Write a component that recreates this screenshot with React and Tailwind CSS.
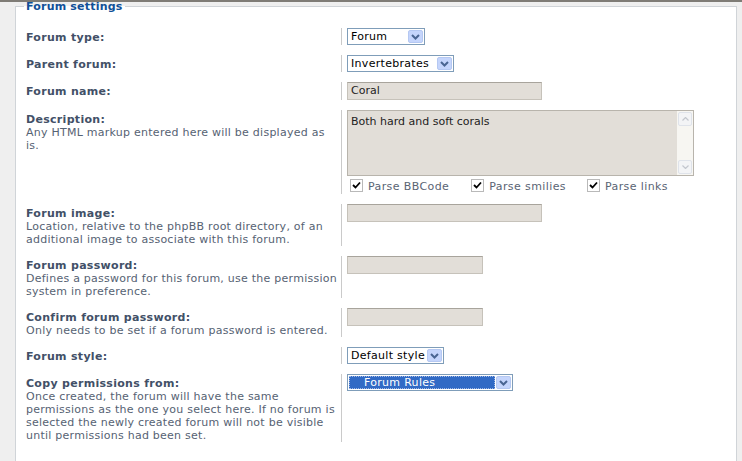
import React from 'react';

const font = { fontFamily: '"DejaVu Sans", Verdana, sans-serif' };

function Arrow() {
    return (
        <span className="mr-[1px] flex h-[13px] w-[15px] items-center justify-center rounded-[2px] border border-[#b5c8f2] bg-[#c5d5fc]">
            <svg width="9" height="6" viewBox="0 0 9 6">
                <path d="M1 1 L4.5 4.5 L8 1" fill="none" stroke="#4a6592" strokeWidth="2" />
            </svg>
        </span>
    );
}

function Select({ width, children, selected }) {
    return (
        <div className={`flex h-[17px] items-center border border-[#7f9db9] bg-white ${width}`}>
            {selected ? (
                <span className="mx-[1px] flex h-[13px] flex-1 items-center border border-dotted border-[#9fb8e6] bg-[#316ac5] pl-[14px] text-[11px] leading-[13px] tracking-[0.3px] text-white">
                    {children}
                </span>
            ) : (
                <span className="flex-1 pl-[3px] text-[11px] leading-[13px] tracking-[0.3px] text-black">{children}</span>
            )}
            <Arrow />
        </div>
    );
}

function Input({ width, value }) {
    return (
        <div className={`h-[18px] border border-[#c6c2ba] border-t-[#a8a49c] bg-[#e2ded8] pl-[3px] text-[11px] leading-[16px] text-[#222] ${width}`}>
            {value}
        </div>
    );
}

function Check({ label, className }) {
    return (
        <span className={`flex items-center ${className}`}>
            <span className="flex h-[13px] w-[13px] items-center justify-center border border-[#b9b9b9] bg-white">
                <svg width="9" height="9" viewBox="0 0 9 9">
                    <path d="M1 4 L3.5 6.5 L8 1.5" fill="none" stroke="#000" strokeWidth="1.8" />
                </svg>
            </span>
            <span className="ml-[5px] mt-[3px] text-[11px] leading-[13px] tracking-[0.4px] text-[#5a6474]">{label}</span>
        </span>
    );
}

function Row({ label, desc, children }) {
    return (
        <div className="flex">
            <div className="w-[315px] pr-[1px] pt-[3px]">
                <div className="text-[11px] font-bold leading-[13px] tracking-[0.3px] text-[#425067]">{label}</div>
                {desc && <div className="text-[11px] leading-[13px] tracking-[0.25px] text-[#566273]">{desc}</div>}
            </div>
            <div className="border-l border-[#cacaca] pl-[5px]">{children}</div>
        </div>
    );
}

export default function App() {
    return (
        <div className="h-[461px] w-[742px] overflow-hidden bg-[#efefef]" style={font}>
            <div className="h-[2px] bg-[#7f7c76]" />
            <fieldset className="ml-[15px] mt-[-2px] h-[500px] w-[722px] border border-[#d0d4d8] bg-white pl-[8px] pt-[15px]">
                <legend className="px-[2px] text-[11px] font-bold leading-[13px] tracking-[0.2px] text-[#115098]">Forum settings</legend>
                <div className="flex flex-col gap-[10px] pl-[2px]">
                    <Row label="Forum type:">
                        <Select width="w-[78px]">Forum</Select>
                    </Row>
                    <Row label="Parent forum:">
                        <Select width="w-[107px]">Invertebrates</Select>
                    </Row>
                    <Row label="Forum name:">
                        <Input width="w-[195px]" value="Coral" />
                    </Row>
                    <Row label="Description:" desc="Any HTML markup entered here will be displayed as is.">
                        <div className="flex h-[66px] w-[347px] border border-[#b8b4ac] bg-[#e2ded8]">
                            <div className="flex-1 pl-[3px] pt-[4px] text-[11px] leading-[13px] text-[#222]">Both hard and soft corals</div>
                            <div className="flex w-[16px] flex-col justify-between bg-[#f7f6f2] px-[1px] py-[1px]">
                                <span className="flex h-[14px] items-center justify-center rounded-[2px] border border-[#dfe3ea] bg-[#f3f4f6]">
                                    <svg width="7" height="4" viewBox="0 0 7 4"><path d="M0.5 3.5 L3.5 0.5 L6.5 3.5" fill="none" stroke="#c3c7ce" strokeWidth="1.2" /></svg>
                                </span>
                                <span className="flex h-[14px] items-center justify-center rounded-[2px] border border-[#dfe3ea] bg-[#f3f4f6]">
                                    <svg width="7" height="4" viewBox="0 0 7 4"><path d="M0.5 0.5 L3.5 3.5 L6.5 0.5" fill="none" stroke="#c3c7ce" strokeWidth="1.2" /></svg>
                                </span>
                            </div>
                        </div>
                        <div className="flex h-[18px] items-start pl-[3px] pt-[1px]">
                            <Check label="Parse BBCode" />
                            <Check label="Parse smilies" className="ml-[22px]" />
                            <Check label="Parse links" className="ml-[21px]" />
                        </div>
                    </Row>
                    <Row label="Forum image:" desc="Location, relative to the phpBB root directory, of an additional image to associate with this forum.">
                        <Input width="w-[195px]" value="" />
                    </Row>
                    <Row label="Forum password:" desc="Defines a password for this forum, use the permission system in preference.">
                        <Input width="w-[136px]" value="" />
                    </Row>
                    <Row label="Confirm forum password:" desc="Only needs to be set if a forum password is entered.">
                        <Input width="w-[136px]" value="" />
                    </Row>
                    <Row label="Forum style:">
                        <Select width="w-[97px]">Default style</Select>
                    </Row>
                    <Row label="Copy permissions from:" desc="Once created, the forum will have the same permissions as the one you select here. If no forum is selected the newly created forum will not be visible until permissions had been set.">
                        <Select width="w-[166px]" selected>Forum Rules</Select>
                    </Row>
                </div>
            </fieldset>
        </div>
    );
}
